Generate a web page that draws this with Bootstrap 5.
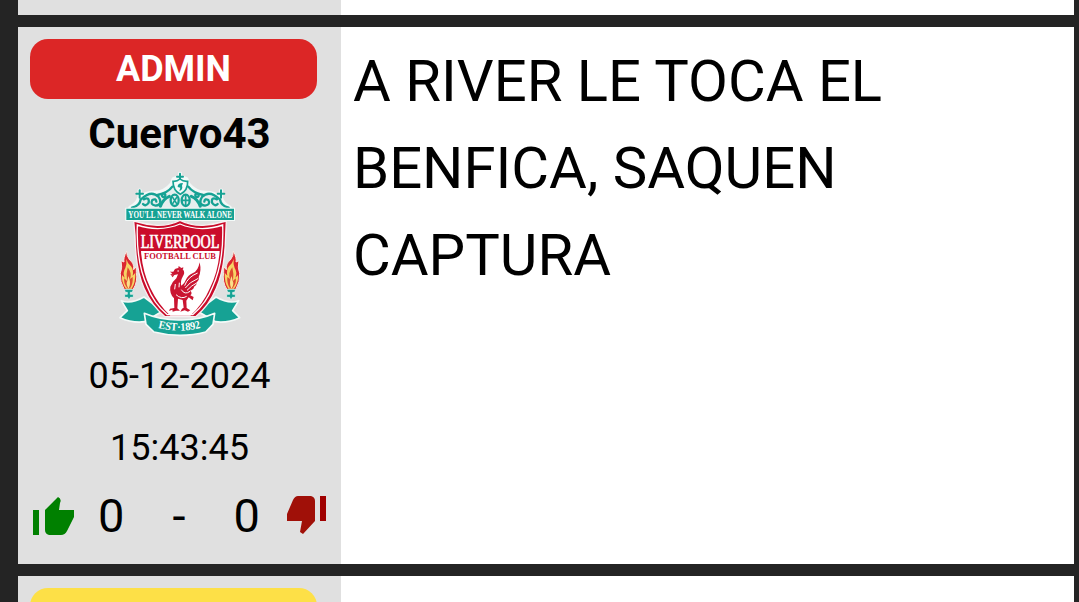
<!DOCTYPE html>
<html lang="es">
<head>
<meta charset="utf-8">
<meta name="viewport" content="width=device-width, initial-scale=1">
<title>Comentarios</title>
<link href="https://cdn.jsdelivr.net/npm/bootstrap@5.3.0/dist/css/bootstrap.min.css" rel="stylesheet">
<style>
body{background:#242424;color:#000;font-family:Roboto,sans-serif;height:602px;overflow:hidden}
.thread{width:1056px;margin-left:18px;gap:12px}
.post{background:#fff}
.post-prev{height:15px}
.post-main{height:537px}
.post-next{height:26px}
.author{width:323px;background:#e0e0e0}
.rank{width:287px;height:60px;margin:12px 0 0 12px;border-radius:18px;font-size:36px;font-weight:700;flex:none}
.rank-admin{background:#dc2626;color:#fff}
.rank-user{background:#fde047}
.nick{font-size:42px;line-height:63px;margin-top:3px}
.crest{width:140px;height:175px}
.stamp{font-size:36px;line-height:72px}
.votes{height:64px;padding:0 13px 0 14px;font-size:47px;line-height:64px}
.tally{margin:0 26px 0 24px}
.thumb{margin-bottom:2px;filter:blur(.45px)}
.message{font-size:58px;line-height:87px;padding:11px 12px}
</style>
</head>
<body>
<main class="thread d-flex flex-column">
  <article class="post post-prev d-flex flex-shrink-0"><div class="author"></div></article>
  <article class="post post-main d-flex flex-shrink-0">
    <aside class="author d-flex flex-column flex-shrink-0">
      <div class="rank rank-admin d-flex align-items-center justify-content-center">ADMIN</div>
      <div class="nick fw-bold text-center">Cuervo43</div>
      <svg class="crest align-self-center flex-shrink-0" viewBox="0 0 420 525" role="img" aria-label="Liverpool Football Club">
        <!-- gate ornament -->
        <g fill="none" stroke="#f1f8f7" stroke-width="13" stroke-linecap="round" stroke-linejoin="round">
          <path d="M61 128Q82 118 88 98Q110 83 135 84Q165 82 185 58L191 43L210 35L229 43L235 58Q255 82 285 84Q310 83 332 98Q338 118 359 128M210 27V38M89 77V96M333 77V96"/>
        </g>
        <path d="M62 130Q84 120 89 99Q112 84 137 85Q170 82 190 62H232Q252 84 285 85Q310 84 333 99Q338 120 359 130Z" fill="#e5eeee"/>
        <g fill="none" stroke="#16a294" stroke-width="7" stroke-linecap="round">
          <path d="M66 128Q90 122 92 103M356 128Q332 122 330 103"/>
          <path d="M94 102Q124 74 146 96Q160 119 137 122Q119 119 127 105Q138 99 139 110M328 102Q298 74 276 96Q262 119 285 122Q303 119 295 105Q284 99 283 110"/>
          <path d="M143 90Q174 83 187 65M279 90Q248 83 235 65M101 103Q119 94 116 113Q107 126 99 117M321 103Q303 94 306 113Q315 126 323 117"/>
          <path d="M151 124Q160 101 178 94M271 124Q262 101 244 94" stroke-width="9"/>
          <path d="M89 76V98M79 86H99M333 76V98M323 86H343M210 26V44M201 35H219" stroke-width="6"/>
          <circle cx="161" cy="91" r="5"/><circle cx="261" cy="91" r="5"/>
          <ellipse cx="194" cy="106" rx="12" ry="17"/><ellipse cx="227" cy="106" rx="12" ry="17"/>
          <path d="M188 97L200 116M200 97L188 116M227 92V121M218 106H237" stroke-width="5"/>
        </g>
        <path d="M189 49Q201 50 210 42Q219 50 233 49Q234 77 211 88Q189 77 189 49Z" fill="#f4fbfa" stroke="#16a294" stroke-width="5"/>
        <path d="M219 54Q202 54 203 66L211 68L208 78Q220 73 216 62Z" fill="#16a294"/>
        <path d="M46 128H375V168H46Z" fill="#f3faf8"/>
        <path d="M49 131H372V165H49Z" fill="#16a294"/>
        <text x="55" y="158" textLength="311" lengthAdjust="spacingAndGlyphs" font-family="Liberation Serif, serif" font-weight="700" font-size="30" fill="#fff">YOU'LL NEVER WALK ALONE</text>
        <!-- tail ribbons -->
        <g fill="#16a294" stroke="#f3faf8" stroke-width="5" stroke-linejoin="round">
          <path d="M34 407Q62 419 102 396L158 438L104 470Q68 475 30 458L52 437Z"/>
          <path d="M386 407Q358 419 318 396L262 438L316 470Q352 475 389 458L368 437Z"/>
        </g>
        <!-- shield -->
        <path d="M71 168Q104 178 141 181Q178 182 210 166Q242 182 279 181Q316 178 349 168L347 211Q345 310 319 370Q297 423 257 455H165Q125 423 102 370Q76 310 75 211Z" fill="#ca0c2b" stroke="#f7f0f1" stroke-width="4"/>
        <path d="M82 180Q110 190 143 191Q180 190 210 177Q240 190 277 191Q310 190 338 180Q342 292 308 365Q289 415 248 449H172Q131 415 112 365Q78 292 82 180Z" fill="none" stroke="#fff" stroke-width="4"/>
        <path d="M93 258H329Q325 319 300 369Q279 418 241 452H181Q144 418 121 369Q97 319 93 258Z" fill="#fff"/>
        <text x="92" y="248" textLength="236" lengthAdjust="spacingAndGlyphs" font-family="Liberation Serif, serif" font-size="55" fill="#fff" stroke="#fff" stroke-width="2">LIVERPOOL</text>
        <text x="102" y="281" textLength="216" lengthAdjust="spacingAndGlyphs" font-family="Liberation Serif, serif" font-weight="700" font-size="27" fill="#ca0c2b">FOOTBALL CLUB</text>
        <!-- liver bird -->
        <g fill="#ca1531">
          <path d="M179 320L190 320L195 312Q211 305 220 315Q226 324 218 335Q210 349 214 362Q224 356 227 346Q234 330 249 324Q264 319 269 292Q275 319 266 336Q269 344 260 352Q261 360 252 365Q252 373 240 377Q249 383 241 391L251 396L248 406L236 397L229 407L230 429L241 436L234 440L224 436L211 440L216 431L221 428L218 405L204 401L202 430L210 437L198 437L188 440L187 434L177 438L180 431L193 429L192 400Q178 386 181 365Q186 351 199 340L204 328L193 330L180 329L187 325Z"/>
          <path d="M193 330L188 337L183 331ZM205 309L206 303L214 309L220 307L219 314Z"/>
        </g>
        <g fill="none" stroke="#fff" stroke-width="3">
          <path d="M224 362Q233 336 263 324M226 369Q237 352 265 340M231 376Q245 361 260 354M214 374Q224 391 240 379M198 389Q214 404 230 394M208 353L207 367M196 357L194 373M202 318H207"/>
        </g>
        <!-- torches -->
        <g id="torch">
          <path d="M50 258Q39 280 42 291L33 287Q38 307 31 325Q29 351 43 374H69Q84 350 79 322L79 305L71 314Q73 294 59 285Q49 272 50 258Z" fill="#dc2630" stroke="#f8e8df" stroke-width="3"/>
          <path d="M49 282Q52 295 63 304Q72 315 68 332L76 323Q77 352 65 371H48Q34 353 36 330L44 338Q37 323 46 309Q51 299 49 282Z" fill="#f6d365"/>
          <path d="M53 307Q67 325 60 342L68 336Q70 356 60 370H52Q39 352 43 340L51 348Q48 326 53 307Z" fill="#df4a30"/>
          <path d="M55 333Q64 352 57 369H54Q47 355 52 348Z" fill="#fbe18a"/>
          <path d="M43 373H70L67 382H61V388H70V397H61L57 406L53 397H44V388H52V382H46Z" fill="#16a294" stroke="#eef7f5" stroke-width="2"/>
        </g>
        <use href="#torch" transform="translate(420 0) scale(-1 1)"/>
        <!-- date scroll -->
        <path d="M103 445Q152 466 210 465Q268 466 314 445L309 478L287 501Q250 511 210 511Q170 511 132 501L108 478Z" fill="#16a294" stroke="#f3faf8" stroke-width="5" stroke-linejoin="round"/>
        <path id="scroll-line" d="M144 489Q208 506 274 488" fill="none"/>
        <text font-family="Liberation Serif, serif" font-weight="700" font-size="34" fill="#fff"><textPath href="#scroll-line" textLength="130" lengthAdjust="spacingAndGlyphs">EST·1892</textPath></text>
      </svg>
      <div class="stamp text-center">05-12-2024</div>
      <div class="stamp text-center">15:43:45</div>
      <div class="votes d-flex align-items-center">
        <svg class="thumb flex-shrink-0" width="42" height="39" viewBox="0 0 42 39" aria-label="Me gusta"><path d="M1 14H7V39H1ZM13 14L26 1Q30 3 28 7L27 14H42V21L35 35Q33 39 29 39H17Q13 38 13 34Z" fill="#008000"/></svg>
        <div class="tally d-flex flex-grow-1 justify-content-between"><span>0</span><span>-</span><span>0</span></div>
        <svg class="thumb flex-shrink-0" width="42" height="39" viewBox="0 0 42 39" aria-label="No me gusta"><path d="M34 0H40V25H34Z" fill="#a00000"/><path d="M12 0H25Q29 1 29 5V25L17 38L14 36L16 25H1V18L7 4Q9 0 12 0Z" fill="#a01008"/></svg>
      </div>
    </aside>
    <div class="message flex-grow-1">A RIVER LE TOCA EL<br>BENFICA, SAQUEN<br>CAPTURA</div>
  </article>
  <article class="post post-next d-flex flex-shrink-0 overflow-hidden"><div class="author"><div class="rank rank-user"></div></div></article>
</main>
<script src="https://cdn.jsdelivr.net/npm/bootstrap@5.3.0/dist/js/bootstrap.bundle.min.js"></script>
</body>
</html>
